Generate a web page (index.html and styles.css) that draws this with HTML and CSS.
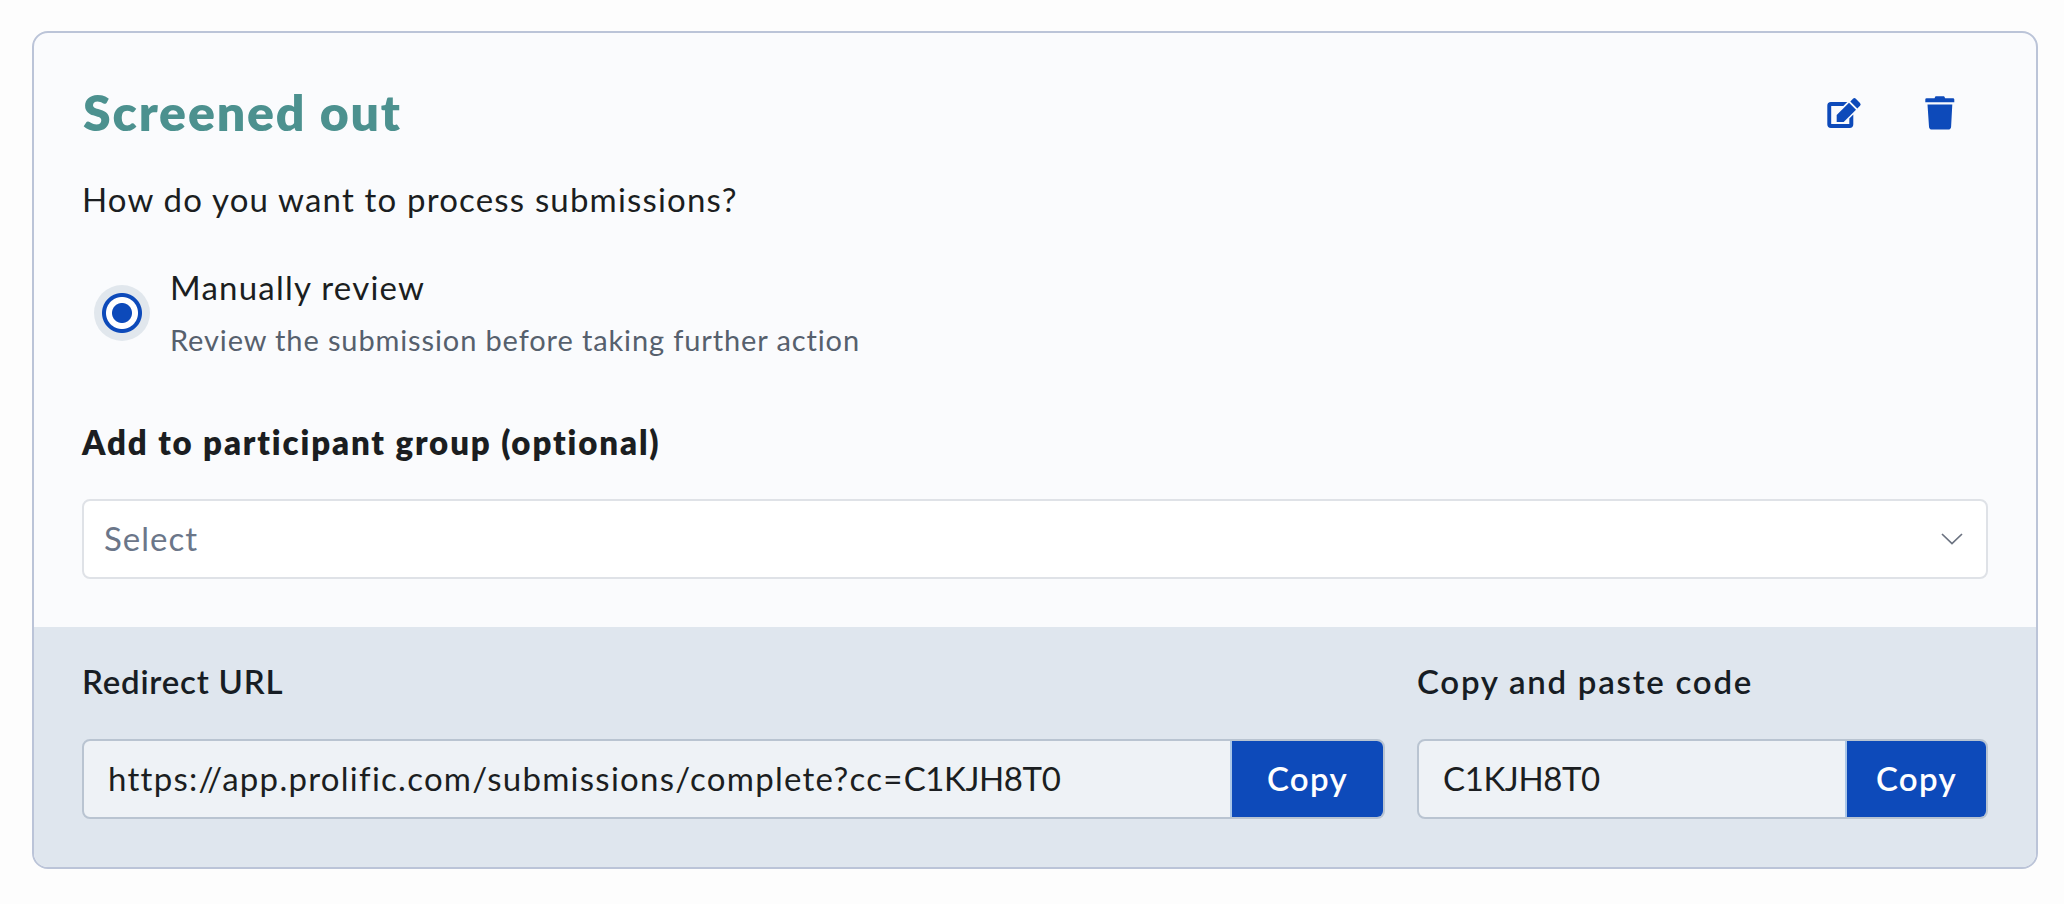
FILE: index.html
```html
<!DOCTYPE html>
<html lang="en">
<head>
<meta charset="utf-8">
<title>Completion path</title>
<link rel="stylesheet" href="styles.css">
</head>
<body>
<section class="card">
  <div class="card-main">
    <header class="card-header">
      <h2 class="title">Screened out</h2>
      <div class="actions">
        <button class="icon-button" aria-label="Edit">
          <svg width="35" height="34" viewBox="0 0 35 34">
            <path d="M20.300 6H4A3.700 3.700 0 0 0 .300 9.700V28.300A3.700 3.700 0 0 0 4 32H22.600A3.700 3.700 0 0 0 26.300 28.300V18.600L22.300 22.600V28H4.200V10H16.300Z"/>
            <path d="M9.700 19 22 6.700 29 13.700 16.700 26H9.700Z"/>
            <path d="M23.300 5.400 26 2.700a2 2 0 0 1 2.800 0L33 6.900a2 2 0 0 1 0 2.800L30.300 12.400Z"/>
          </svg>
        </button>
        <button class="icon-button" aria-label="Delete">
          <svg width="30" height="34" viewBox="0 0 30 34">
            <path d="M9.5 2.3 10.5.3h8.6l1.1 2H28a1.3 1.3 0 0 1 1.3 1.3v2.7H.3V3.600A1.300 1.300 0 0 1 1.600 2.300Z"/>
            <path d="M2.500 8.500H27.300L26.100 30.700A3 3 0 0 1 23.100 33.500H7A3 3 0 0 1 4 30.700Z"/>
          </svg>
        </button>
      </div>
    </header>
    <p class="question">How do you want to process submissions?</p>
    <label class="option">
      <span class="radio"></span>
      <span class="option-text">
        <span class="option-name">Manually review</span>
        <span class="option-help">Review the submission before taking further action</span>
      </span>
    </label>
    <h3 class="group-label">Add to participant group (optional)</h3>
    <div class="select">
      <span class="placeholder">Select</span>
      <svg class="chevron" width="22" height="12" viewBox="0 0 22 12"><path d="M1 1 11 10.600 21 1"/></svg>
    </div>
  </div>
  <footer class="card-footer">
    <div class="field field-url">
      <span class="field-label label-url">Redirect URL</span>
      <div class="copy-group">
        <div class="value"><span class="url">https://app.prolific.com/submissions/complete?cc=</span><span class="code">C1KJH8T0</span></div>
        <button class="copy">Copy</button>
      </div>
    </div>
    <div class="field field-code">
      <span class="field-label label-code">Copy and paste code</span>
      <div class="copy-group">
        <div class="value"><span class="code">C1KJH8T0</span></div>
        <button class="copy copy-narrow">Copy</button>
      </div>
    </div>
  </footer>
</section>
</body>
</html>
```

FILE: styles.css
```css
* { box-sizing: border-box; }
body {
  margin: 0;
  padding: 31px 26px 35px 32px;
  background: #fdfdfd;
  color: #1b1e21;
  font: 400 33px/40px Lato, "Open Sans", sans-serif;
}
button { border: 0; margin: 0; padding: 0; background: none; font: inherit; }
.card {
  height: 838px;
  display: flex;
  flex-direction: column;
  border: 2px solid #bbc4d8;
  border-radius: 16px;
  background: #fafbfd;
  overflow: hidden;
}
.card-main { height: 594px; padding: 48px 48px 0; }
.card-header { display: flex; justify-content: space-between; align-items: center; height: 64px; }
.title { margin: 0; padding: 0 0 2px 1px; color: #4c918f; font-size: 50px; line-height: 62px; font-weight: 800; letter-spacing: 1.82px; }
.actions { display: flex; align-items: center; gap: 63px; padding-right: 33px; }
.icon-button { display: flex; color: #0d4aba; }
.icon-button svg { fill: currentColor; }
.question { margin: 34px 0 0; letter-spacing: 1.18px; }
.option { display: flex; align-items: center; gap: 20px; margin: 37px 0 0 12px; height: 112px; }
.radio {
  width: 56px; height: 56px;
  margin-top: 2px;
  border-radius: 50%;
  background: radial-gradient(circle, #0d4aba 9.500px, #fff 10.500px 15.500px, #0d4aba 16.500px 19.500px, #e1e7ed 20.500px);
}
.option-text { display: flex; flex-direction: column; }
.option-name { line-height: 54px; letter-spacing: 1.25px; }
.option-help { color: #56606d; font-size: 29px; line-height: 52px; letter-spacing: .88px; margin-bottom: -2px; }
.group-label { margin: 54px 0 0; font-size: 33px; line-height: 40px; font-weight: 800; letter-spacing: 1.87px; }
.select {
  display: flex; align-items: center; justify-content: space-between;
  height: 80px; margin-top: 37px; padding: 0 23px 0 20px;
  border: 2px solid #dfe2e7; border-radius: 8px; background: #fff;
}
.placeholder { padding-bottom: 3px; color: #6b7689; letter-spacing: 1px; }
.chevron { fill: none; stroke: #6b7280; stroke-width: 1.700; }
.card-footer {
  flex: 1;
  display: flex; gap: 32px;
  padding: 34px 48px 0;
  background: #dfe6ee;
}
.field { display: flex; flex-direction: column; gap: 38px; }
.field-url { width: 1303px; }
.field-code { flex: 1; }
.field-label { color: #171d24; font-weight: 600; }
.label-url { letter-spacing: .8px; }
.label-code { letter-spacing: 1.74px; }
.copy-group {
  display: flex; height: 80px;
  border: 2px solid #b9c4d1; border-radius: 8px;
  background: #eef2f6; overflow: hidden;
}
.value { flex: 1; display: flex; align-items: center; padding: 0 0 2px 24px; white-space: nowrap; }
.url { letter-spacing: 1.27px; }
.code { letter-spacing: -.4px; }
.copy {
  width: 153px;
  padding-bottom: 2px;
  border-left: 2px solid #a9c6e8;
  background: #0d4aba; color: #fff;
  font-weight: 600; letter-spacing: 1.3px;
}
.copy-narrow { width: 141px; }
```
